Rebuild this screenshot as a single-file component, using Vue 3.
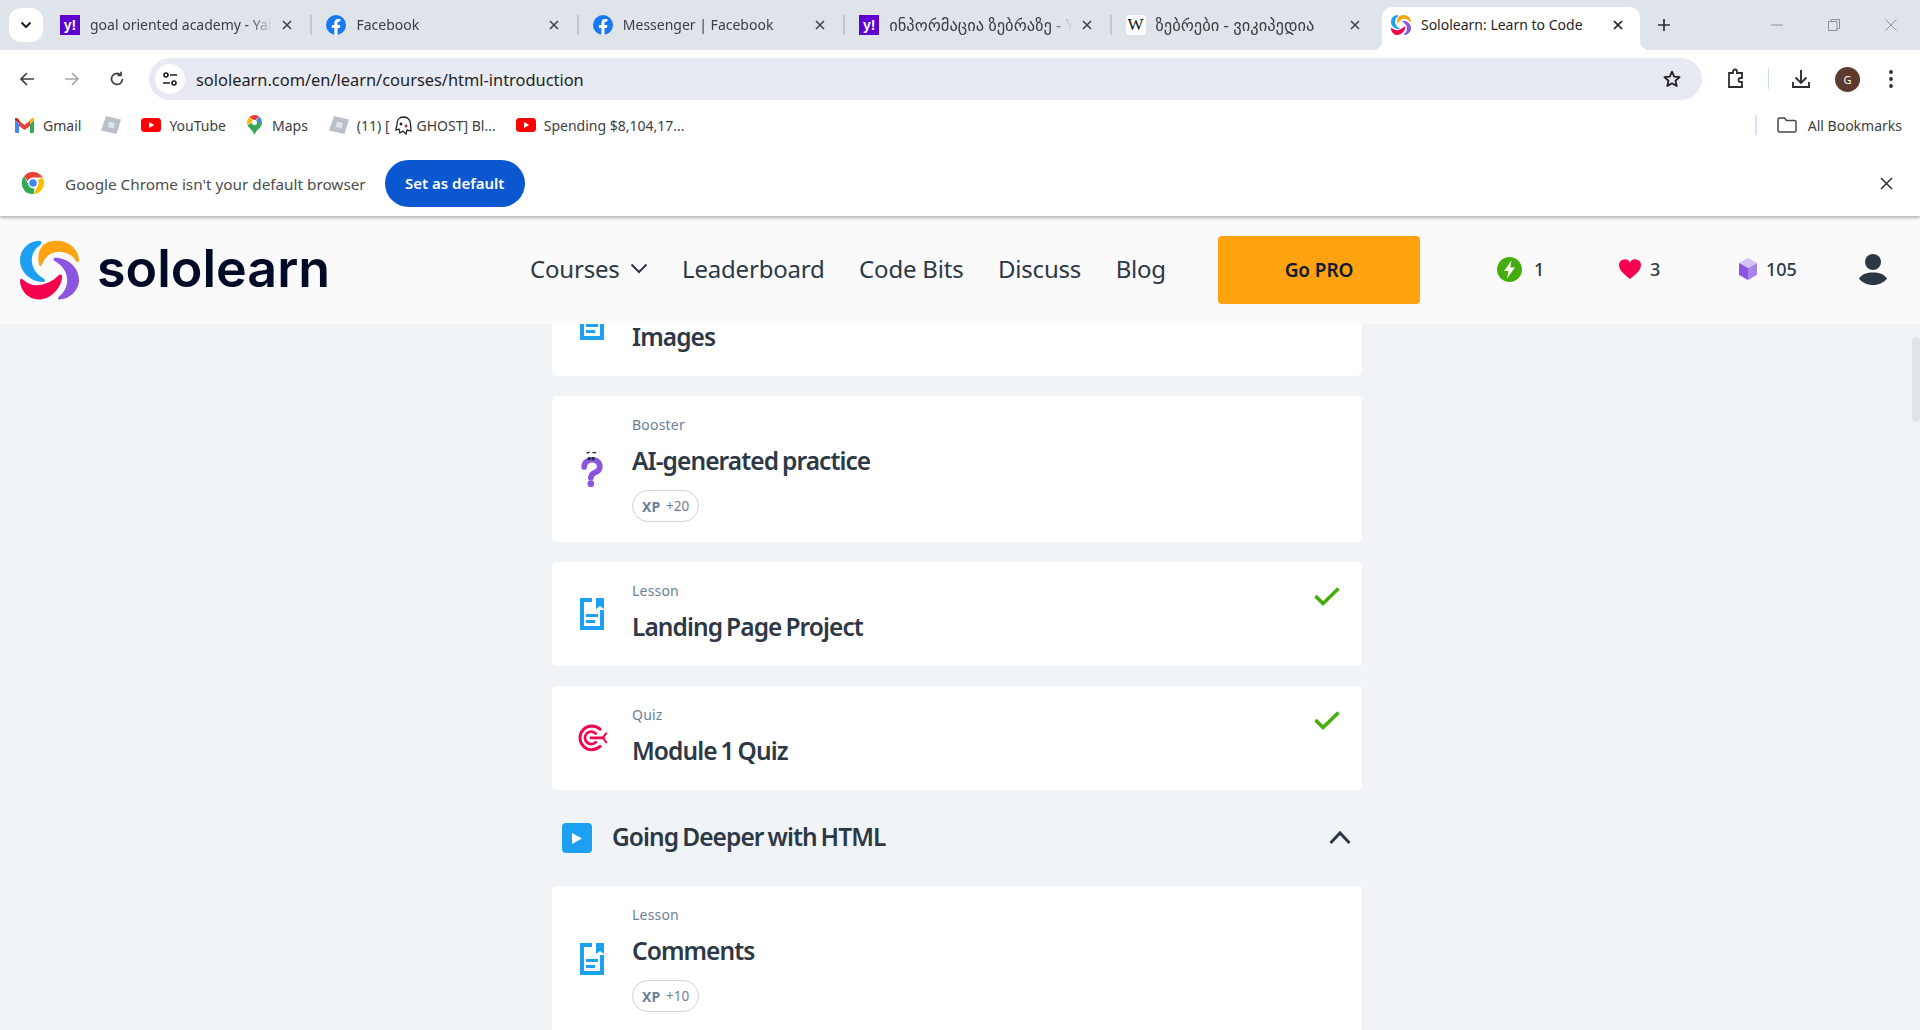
<script setup>
const tabs = [
  { title: 'goal oriented academy - Yahoo', icon: 'yahoo' },
  { title: 'Facebook', icon: 'fb' },
  { title: 'Messenger | Facebook', icon: 'fb' },
  { title: 'ინპორმაცია ზებრაზე - Yahoo', icon: 'yahoo', ka: true },
  { title: 'ზებრები - ვიკიპედია', icon: 'wiki', ka: true }
]
const navItems = ['Leaderboard', 'Code Bits', 'Discuss', 'Blog']
const cards = [
  { id: 1, label: 'Lesson', title: 'Images', icon: 'doc' },
  { id: 2, label: 'Booster', title: 'AI-generated practice', icon: 'question', xp: '+20' },
  { id: 3, label: 'Lesson', title: 'Landing Page Project', icon: 'doc', done: true },
  { id: 4, label: 'Quiz', title: 'Module 1 Quiz', icon: 'target', done: true },
  { id: 5, section: 'Going Deeper with HTML' },
  { id: 6, label: 'Lesson', title: 'Comments', icon: 'doc', xp: '+10' }
]
</script>

<template>
  <div class="page">
    <svg class="sprite" aria-hidden="true">
      <defs>
        <symbol id="mark" viewBox="60 47 175 175">
          <path fill="#1ea0f2" d="M118 48C85 48 60 75 60 105C60 140 90 170 130 170C136 170 135 163 130 160C105 145 95 125 95 105C95 85 105 70 120 60C126 55 124 48 118 48Z" />
          <path fill="#ffa310" d="M118 122C110 100 110 48 170 48C205 48 235 75 235 107C235 112 228 112 226 108C215 88 195 80 175 80C150 80 135 95 124 120C122 125 119 125 118 122Z" />
          <path fill="#8c55e0" d="M165 98C200 98 235 125 235 165C235 195 205 222 178 222C172 222 171 216 176 213C190 203 200 185 200 165C200 140 185 120 163 108C157 104 159 98 165 98Z" />
          <path fill="#f6034f" d="M60 165C60 160 66 160 70 164C85 178 105 182 125 178C150 172 165 160 175 150C180 145 186 148 185 155C182 190 150 222 115 222C85 222 60 195 60 165Z" />
        </symbol>
        <symbol id="fb" viewBox="0 0 20 20">
          <circle cx="10" cy="10" r="10" fill="#1877f2" />
          <path fill="#fff" d="M13.9 12.9l.45-2.9h-2.8V8.1c0-.8.4-1.55 1.6-1.55h1.27V4.1s-1.15-.2-2.25-.2c-2.3 0-3.8 1.4-3.8 3.9V10H5.8v2.9h2.57v7a10 10 0 0 0 3.18 0v-7z" />
        </symbol>
        <symbol id="yt" viewBox="0 0 20 14">
          <rect width="20" height="14" rx="3.5" fill="#f00" />
          <path fill="#fff" d="M8 4l5.2 3L8 10z" />
        </symbol>
        <symbol id="roblox" viewBox="0 0 20 20">
          <path fill="#b9c0c9" d="M5 1l15 3.5L15.5 19 0 15.5z" />
          <path fill="#dfe3e8" d="M8 6.5l6 1.4-1.4 5.6-6-1.4z" />
        </symbol>
        <symbol id="doc" viewBox="0 0 24 32">
          <path fill="#1ea0f2" d="M0 0h12v4H4v24h16V12h4v20H0z" />
          <path fill="#1ea0f2" d="M16 0h8v11l-4-3-4 3zM6 16h12v3H6zM6 22h9v3H6z" />
        </symbol>
        <symbol id="question" viewBox="120 180 80 120">
          <path fill="none" stroke="#8c55e0" stroke-width="17" stroke-linecap="round" d="M135 234C135 206 182 204 182 234C182 254 155 246 155 266" />
          <circle cx="155" cy="284" r="10" fill="#8c55e0" />
          <circle cx="150" cy="209" r="5" fill="#1f2733" />
          <circle cx="162" cy="209" r="5" fill="#1f2733" />
          <path fill="none" stroke="#1f2733" stroke-width="4" d="M142 193l10-4M160 191h11" />
        </symbol>
        <symbol id="target" viewBox="105 160 100 92">
          <g fill="none" stroke="#f6034f" stroke-linecap="round">
            <path stroke-width="9" d="M178 181A36 36 0 1 0 178 233" />
            <path stroke-width="8" d="M165 194A19 19 0 1 0 165 220" />
            <path stroke-width="8" d="M150 207H188" />
            <path stroke-width="6" d="M197 193L186 207L197 221" />
          </g>
        </symbol>
      </defs>
    </svg>

    <!-- Browser chrome -->
    <div class="tabstrip">
      <button class="tab-search">
        <svg width="12" height="8" viewBox="0 0 12 8"><path d="M1.5 1.5L6 6l4.5-4.5" fill="none" stroke="#1f1f1f" stroke-width="2" /></svg>
      </button>
      <div v-for="(tab, i) in tabs" :key="i" class="tab">
        <span v-if="tab.icon === 'yahoo'" class="fav yahoo">y!</span>
        <svg v-else-if="tab.icon === 'fb'" class="fav" viewBox="0 0 20 20"><use href="#fb" /></svg>
        <span v-else class="fav wiki">W</span>
        <span class="tab-title" :class="{ ka: tab.ka }">{{ tab.title }}</span>
        <svg class="tab-x" width="10" height="10" viewBox="0 0 10 10"><path d="M1 1l8 8M9 1l-8 8" stroke="#3c4043" stroke-width="1.5" /></svg>
      </div>
      <div class="tab active">
        <svg class="fav" viewBox="0 0 20 20"><use href="#mark" /></svg>
        <span class="tab-title">Sololearn: Learn to Code</span>
        <svg class="tab-x" width="10" height="10" viewBox="0 0 10 10"><path d="M1 1l8 8M9 1l-8 8" stroke="#1f1f1f" stroke-width="1.7" /></svg>
      </div>
      <svg class="tab-plus" width="14" height="14" viewBox="0 0 14 14"><path d="M7 1v12M1 7h12" stroke="#2b2f33" stroke-width="1.7" /></svg>
      <div class="win-controls">
        <svg width="12" height="12" viewBox="0 0 12 12"><path d="M0 6h12" stroke="#8e9297" /></svg>
        <svg width="12" height="12" viewBox="0 0 12 12"><path d="M.5 2.5h8.5v9H.5zM3 2.5V.5h8.5v9H9" fill="none" stroke="#8e9297" /></svg>
        <svg width="12" height="12" viewBox="0 0 12 12"><path d="M.5.5l11 11M11.5.5l-11 11" stroke="#8e9297" /></svg>
      </div>
    </div>

    <div class="toolbar">
      <svg class="tool" viewBox="0 0 16 16"><path d="M15 8H2M8 2L2 8l6 6" fill="none" stroke="#3c4043" stroke-width="1.7" /></svg>
      <svg class="tool" viewBox="0 0 16 16"><path d="M1 8h13M8 2l6 6-6 6" fill="none" stroke="#a4a7ab" stroke-width="1.7" /></svg>
      <svg class="tool" viewBox="0 0 16 16"><path d="M13.5 8A5.5 5.5 0 1 1 11.6 3.8M12 .8v3.6H8.4" fill="none" stroke="#3c4043" stroke-width="1.7" /></svg>
      <div class="omnibox">
        <span class="site-btn">
          <svg width="16" height="16" viewBox="0 0 16 16"><g fill="none" stroke="#1f1f1f" stroke-width="1.6"><circle cx="4" cy="4" r="2" /><circle cx="12" cy="12" r="2" /><path d="M8 4h7M1 12h7" /></g></svg>
        </span>
        <span class="url">sololearn.com/en/learn/courses/html-introduction</span>
        <svg class="star" width="20" height="20" viewBox="0 0 20 20"><path d="M10 2.6l2.2 5 5.4.5-4.1 3.6 1.2 5.3L10 14.2 5.3 17l1.2-5.3L2.4 8.1l5.4-.5z" fill="none" stroke="#1f1f1f" stroke-width="1.8" stroke-linejoin="round" /></svg>
      </div>
      <div class="tool-right">
        <svg width="22" height="22" viewBox="0 0 22 22"><path d="M4 5h4V3.5a2 2 0 0 1 4 0V5h5v5h-1.500a2 2 0 0 0 0 4H17v5H4z" fill="none" stroke="#2b2f33" stroke-width="1.8" /></svg>
        <i class="tool-sep"></i>
        <svg width="22" height="22" viewBox="0 0 22 22"><path d="M11 2v13M5.500 9.500L11 15l5.500-5.500M3 14v5h16v-5" fill="none" stroke="#2b2f33" stroke-width="1.9" /></svg>
        <span class="avatar">G</span>
        <svg width="6" height="20" viewBox="0 0 6 20"><circle cx="3" cy="3" r="1.900" fill="#2b2f33" /><circle cx="3" cy="10" r="1.900" fill="#2b2f33" /><circle cx="3" cy="17" r="1.900" fill="#2b2f33" /></svg>
      </div>
    </div>

    <div class="bookmarks">
      <span class="bm bm-gmail">
        <svg width="19" height="15" viewBox="0 0 19 15"><path fill="#4285f4" d="M0 2v11.500A1.500 1.500 0 0 0 1.500 15H4V6z" /><path fill="#34a853" d="M15 6v9h2.500a1.500 1.500 0 0 0 1.500-1.500V2z" /><path fill="#ea4335" d="M4 8V2.500L9.500 7 15 2.500V8L9.500 12z" /><path fill="#c5221f" d="M0 2l4 3.500V1.500L2.500.4A1.500 1.500 0 0 0 0 2z" /><path fill="#fbbc04" d="M19 2l-4 3.500V1.500L16.500.4A1.500 1.500 0 0 1 19 2z" /></svg>
        Gmail
      </span>
      <svg class="bm-roblox" width="20" height="20" viewBox="0 0 20 20"><use href="#roblox" /></svg>
      <span class="bm bm-yt"><svg width="20" height="14" viewBox="0 0 20 14"><use href="#yt" /></svg>YouTube</span>
      <span class="bm bm-maps">
        <svg width="15" height="20" viewBox="0 0 15 20"><path fill="#ea4335" d="M2.200 2.200A7.500 7.500 0 0 1 12 1.400L8 6z" /><path fill="#4285f4" d="M12 1.400A7.500 7.500 0 0 1 15 7.500c0 1-.2 1.800-.6 2.700L9 6z" /><path fill="#fbbc04" d="M2.200 2.200A7.500 7.500 0 0 0 .6 10.200L6 6z" /><path fill="#34a853" d="M14.400 10.200C12.800 13.500 8.800 15.500 7.500 20c-1.300-4.500-5.300-6.500-6.900-9.800L10 5z" /><circle cx="7.500" cy="7.500" r="2.600" fill="#fff" /></svg>
        Maps
      </span>
      <svg class="bm-roblox2" width="20" height="20" viewBox="0 0 20 20"><use href="#roblox" /></svg>
      <span class="bm bm-ghost">(11) [
        <svg width="17" height="19" viewBox="0 0 17 19"><path d="M8.500 1C4 1 2 4.500 2 8c0 2-1 4-1 6l3-1 1 4 3-2 3 3 1-4 4 1c0-3-.5-5-.5-7 0-4-3-7-6.500-7z" fill="#fff" stroke="#222" stroke-width="1.300" /><circle cx="6" cy="8" r="1.400" fill="#222" /><circle cx="11" cy="10" r="1.400" fill="#c22" /></svg>
        GHOST] Bl...
      </span>
      <span class="bm bm-spend"><svg width="20" height="14" viewBox="0 0 20 14"><use href="#yt" /></svg>Spending $8,104,17...</span>
      <i class="bm-sep"></i>
      <span class="bm bm-all">
        <svg width="20" height="16" viewBox="0 0 20 16"><path d="M1 2.500A1.500 1.500 0 0 1 2.500 1h5l2 2.500h8A1.500 1.500 0 0 1 19 5v8.500a1.500 1.500 0 0 1-1.500 1.500h-15A1.500 1.500 0 0 1 1 13.500z" fill="none" stroke="#474747" stroke-width="1.500" /></svg>
        All Bookmarks
      </span>
    </div>

    <div class="infobar">
      <svg width="22" height="22" viewBox="0 0 22 22">
        <path fill="#ea4335" d="M11 0a11 11 0 0 1 9.530 5.500H11a5.500 5.500 0 0 0-5.200 3.700L2.100 4.300A11 11 0 0 1 11 0z" />
        <path fill="#fbbc04" d="M20.530 5.500A11 11 0 0 1 11.500 22l4.270-8.200A5.500 5.500 0 0 0 15.800 8.200z" />
        <path fill="#34a853" d="M11.500 22A11 11 0 0 1 2.100 4.300l4.630 8.700a5.500 5.500 0 0 0 5.800 3.400z" />
        <circle cx="11" cy="11" r="4.400" fill="#4285f4" stroke="#fff" stroke-width="1.200" />
      </svg>
      <span class="info-text">Google Chrome isn't your default browser</span>
      <button class="set-default">Set as default</button>
      <svg class="info-x" width="13" height="13" viewBox="0 0 13 13"><path d="M1 1l11 11M12 1L1 12" stroke="#2b2f33" stroke-width="1.500" /></svg>
    </div>

    <!-- Site -->
    <header class="site-header">
      <div class="brand">
        <svg class="brand-mark" viewBox="0 0 59 60"><use href="#mark" /></svg>
        <span class="brand-name">sololearn</span>
      </div>
      <nav class="nav">
        <span class="nav-item">Courses
          <svg width="18" height="11" viewBox="0 0 18 11"><path d="M1.500 1.500L9 9l7.500-7.500" fill="none" stroke="#2d3846" stroke-width="2" /></svg>
        </span>
        <span v-for="item in navItems" :key="item" class="nav-item">{{ item }}</span>
      </nav>
      <button class="go-pro">Go PRO</button>
      <div class="stats">
        <span class="stat stat-bolt">
          <svg width="25" height="25" viewBox="0 0 25 25"><circle cx="12.500" cy="12.500" r="12.500" fill="#44ac0c" /><path fill="#fff" d="M14.500 3.500L7 14h4.500L10 21.500 18 10.500h-4.700z" /></svg>
          1
        </span>
        <span class="stat stat-heart">
          <svg width="22" height="20" viewBox="0 0 22 20"><path fill="#f6034f" d="M11 20C7 16.500 0 12 0 6a5.800 5.800 0 0 1 11-2.500A5.800 5.800 0 0 1 22 6c0 6-7 10.500-11 14z" /></svg>
          3
        </span>
        <span class="stat stat-gem">
          <svg width="18" height="22" viewBox="0 0 18 22"><path fill="#d2c2f5" d="M9 0l9 5-9 5-9-5z" /><path fill="#8c55e0" d="M0 5l9 5v12l-9-5z" /><path fill="#a982ec" d="M18 5l-9 5v12l9-5z" /></svg>
          105
        </span>
        <svg class="user" width="28" height="31" viewBox="0 0 28 31"><ellipse cx="14" cy="8" rx="8" ry="8" fill="#2d3846" /><path fill="#2d3846" d="M0 24.500C3 20 8 18.500 14 18.500s11 1.500 14 6c-3 4-8 6.500-14 6.500S3 28.500 0 24.500z" /></svg>
      </div>
    </header>

    <main class="content">
      <div class="list">
        <template v-for="c in cards" :key="c.id">
          <div v-if="c.section" class="section">
            <span class="play"><svg width="12" height="13" viewBox="0 0 12 13"><path d="M1 1l10 5.500L1 12z" fill="#fff" /></svg></span>
            <span class="section-title">{{ c.section }}</span>
            <svg class="chevron" width="22" height="15" viewBox="0 0 22 15"><path d="M1.500 13L11 3l9.500 10" fill="none" stroke="#2d3846" stroke-width="3" /></svg>
          </div>
          <article v-else class="card">
            <div class="card-icon">
              <svg v-if="c.icon === 'doc'" width="24" height="32" viewBox="0 0 24 32"><use href="#doc" /></svg>
              <svg v-else-if="c.icon === 'question'" width="27" height="40" viewBox="0 0 80 120"><use href="#question" /></svg>
              <svg v-else width="33" height="31" viewBox="0 0 100 92"><use href="#target" /></svg>
            </div>
            <div class="card-body">
              <div class="card-label">{{ c.label }}</div>
              <h3 class="card-title">{{ c.title }}</h3>
              <div v-if="c.xp" class="xp"><b>XP</b><span>{{ c.xp }}</span></div>
            </div>
            <svg v-if="c.done" class="check" width="26" height="19" viewBox="0 0 26 19"><path d="M1.500 9L9 16.500 24.500 1.500" fill="none" stroke="#44ac0c" stroke-width="3.500" /></svg>
          </article>
        </template>
      </div>
      <span class="scrollbar"></span>
    </main>
  </div>
</template>

<style scoped>
.page { width: 1920px; height: 1030px; overflow: hidden; display: flex; flex-direction: column; background: #fff; font-family: "Noto Sans", "DejaVu Sans", sans-serif; }
.sprite { position: absolute; width: 0; height: 0; }

.tabstrip { height: 50px; flex: none; background: #dfe3ea; display: flex; align-items: flex-start; position: relative; padding-left: 9px; }
.tab-search { width: 34px; height: 34px; margin-top: 8px; margin-right: 3px; border: 0; border-radius: 12px; background: #fff; display: flex; align-items: center; justify-content: center; padding: 0; }
.tab { width: 266.400px; display: flex; align-items: center; padding-left: 14px; padding-right: 18px; box-sizing: border-box; border-right: 2px solid #c4c8ce; height: 20px; margin-top: 15px; gap: 10px; font-size: 14px; color: #3c4043; }
.tab:nth-child(6) { border-right: 0; }
.fav { width: 20px; height: 20px; flex: none; }
.yahoo { background: #5f01d1; color: #fff; font: 700 14px/20px "Liberation Sans", sans-serif; text-align: center; }
.wiki { background: #fff; color: #111; font: 400 17px/20px "Liberation Serif", serif; text-align: center; border-radius: 3px; }
.tab-title { flex: 1; min-width: 0; line-height: 20px; white-space: nowrap; overflow: hidden; -webkit-mask-image: linear-gradient(90deg, #000 88%, transparent); mask-image: linear-gradient(90deg, #000 88%, transparent); }
.tab-title.ka { font-size: 16.500px; }
.tab-x { flex: none; }
.tab.active { width: 258px; height: 43px; margin-top: 7px; margin-left: 4px; background: #fff; border: 0; border-radius: 10px 10px 0 0; padding: 0 17px 7px 9px; color: #1f1f1f; position: relative; }
.tab.active::before, .tab.active::after { content: ""; position: absolute; bottom: 0; width: 10px; height: 10px; }
.tab.active::before { left: -10px; background: radial-gradient(circle at 0 0, transparent 10px, #fff 10.500px); }
.tab.active::after { right: -10px; background: radial-gradient(circle at 100% 0, transparent 10px, #fff 10.500px); }
.tab.active .tab-title { -webkit-mask-image: none; mask-image: none; }
.tab-plus { margin-top: 18px; margin-left: 17px; }
.win-controls { position: absolute; right: 23px; top: 19px; display: flex; gap: 45px; }

.toolbar { height: 50px; flex: none; background: #fff; display: flex; align-items: center; padding: 8px 0 0 19px; box-sizing: border-box; position: relative; border-radius: 8px 8px 0 0; }
.tool { width: 16px; height: 16px; margin-right: 29px; flex: none; }
.omnibox { width: 1553px; height: 42px; margin-left: -5px; border-radius: 21px; background: #e7eaf3; display: flex; align-items: center; padding-left: 6px; box-sizing: border-box; flex: none; }
.site-btn { width: 30px; height: 30px; border-radius: 50%; background: #fff; display: flex; align-items: center; justify-content: center; }
.url { margin-left: 11px; flex: 1; font-size: 16.400px; color: #1f1f1f; }
.star { margin-right: 20px; }
.tool-right { display: flex; align-items: center; margin-left: 23px; }
.tool-sep { width: 1px; height: 20px; background: #c7d8f0; margin: 0 21px 0 21px; }
.avatar { width: 25px; height: 25px; border-radius: 50%; background: #5d3a2c; color: #fff; font-size: 11px; line-height: 25px; text-align: center; margin: 0 28px 0 23px; }

.bookmarks { height: 50px; flex: none; display: flex; align-items: center; font-size: 14px; color: #3c4043; position: relative; }
.bm { display: flex; align-items: center; white-space: nowrap; }
.bm-gmail { margin-left: 15px; gap: 9px; }
.bm-roblox { margin-left: 20px; flex: none; }
.bm-yt { margin-left: 20px; gap: 8px; }
.bm-maps { margin-left: 21px; gap: 10px; }
.bm-roblox2 { margin-left: 21px; flex: none; }
.bm-ghost { margin-left: 8px; gap: 5px; }
.bm-spend { margin-left: 20px; gap: 8px; }
.bm-sep { width: 2px; height: 20px; background: #d3e3fd; margin-left: auto; }
.bm-all { margin-left: 20px; margin-right: 18px; gap: 11px; }

.infobar { height: 66px; flex: none; display: flex; align-items: center; padding-left: 22px; position: relative; box-shadow: 0 2px 3px rgba(0,0,0,.28); z-index: 3; font-size: 15.300px; color: #4a4d51; background: #fff; }
.info-text { margin-left: 21px; white-space: nowrap; padding-top: 1px; }
.set-default { width: 140px; height: 47px; margin-left: 19px; border: 0; border-radius: 24px; background: #0b57d0; color: #fff; font: 600 15px "Noto Sans", sans-serif; }
.info-x { position: absolute; right: 27px; top: 27px; }

.site-header { height: 108px; flex: none; background: #fafafa; display: flex; align-items: center; padding-left: 20px; box-sizing: border-box; position: relative; z-index: 2; }
.brand { width: 510px; flex: none; display: flex; align-items: center; gap: 18px; }
.brand-mark { width: 59px; height: 60px; }
.brand-name { font: 600 52px/60px Inter, sans-serif; color: #020b26; margin-top: -3px; }
.nav { display: flex; align-items: center; width: 688px; gap: 34.500px; flex: none; margin-bottom: 4px; }
.nav-item { font-size: 24px; letter-spacing: -.2px; color: #2d3846; display: flex; align-items: center; gap: 10px; white-space: nowrap; }
.go-pro { width: 202px; height: 68px; flex: none; border: 0; border-radius: 4px; background: #ffa210; color: #111a2c; font: 600 19px "Noto Sans", sans-serif; letter-spacing: -.1px; }
.stats { display: flex; align-items: center; margin-left: 77px; margin-bottom: 2px; position: relative; flex: 1; }
.stat { display: flex; align-items: center; font-size: 18px; font-weight: 500; color: #2d3846; }
.stat-bolt { width: 122px; gap: 12px; }
.stat-heart { width: 120px; gap: 9px; }
.stat-gem { width: 120px; gap: 9px; }
.user { flex: none; }

.content { flex: 1; min-height: 0; overflow: hidden; background: #f0f4f7; position: relative; }
.list { width: 810px; margin: -52px 0 0 552px; display: flex; flex-direction: column; gap: 20px; }
.card { background: #fff; border-radius: 5px; display: flex; align-items: center; position: relative; min-height: 104px; box-sizing: border-box; padding: 19px 0 20px; }
.card-icon { width: 80px; flex: none; display: flex; justify-content: center; }
.card-body { align-self: flex-start; }
.card-label { font-size: 14px; line-height: 20px; color: #6b7f99; letter-spacing: .2px; }
.card-title { margin: 8px 0 0; font-size: 24.500px; line-height: 36px; font-weight: 600; color: #2d3846; letter-spacing: -.92px; word-spacing: -1.500px; }
.xp { margin-top: 11px; height: 32px; box-sizing: border-box; display: inline-flex; align-items: center; gap: 6px; padding: 0 9px; border: 1px solid #c9d3dc; border-radius: 16px; font-size: 13.500px; color: #6b7f99; }
.xp b { font-weight: 700; font-size: 14px; }
.check { position: absolute; right: 22px; top: 25px; }
.section { height: 56px; display: flex; align-items: center; padding-left: 10px; }
.play { width: 30px; height: 30px; background: #1ea0f2; border-radius: 4px; display: flex; align-items: center; justify-content: center; }
.section-title { margin: 0 0 3px 20px; font-size: 24.500px; font-weight: 600; color: #2d3846; letter-spacing: -.92px; word-spacing: -1.500px; }
.chevron { margin: 0 11px 2px auto; }
.scrollbar { position: absolute; right: 0; top: 13px; width: 8px; height: 85px; border-radius: 4px; background: #dfe4e9; }
</style>

<style>
html, body { margin: 0; overflow: hidden; }
</style>
